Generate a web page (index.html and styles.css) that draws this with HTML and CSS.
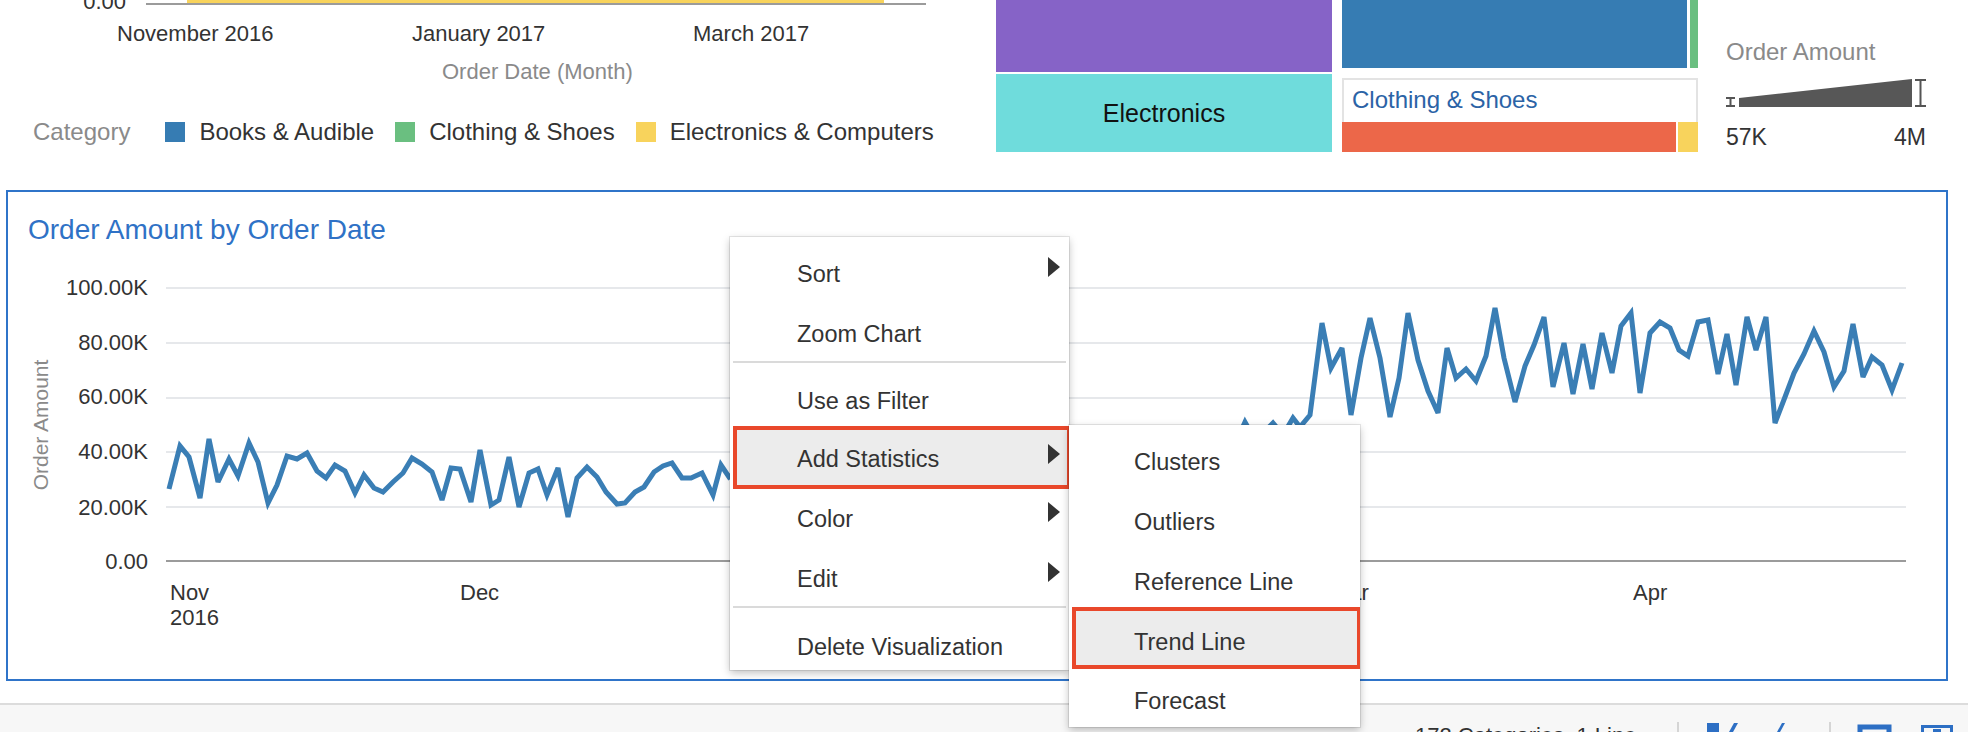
FILE: index.html
```html
<!DOCTYPE html>
<html>
<head>
<meta charset="utf-8">
<title>Order Amount by Order Date</title>
<link rel="stylesheet" href="styles.css">
</head>
<body>
<div class="page">
  <section class="top">
    <div class="bar-stub">
      <div class="axis-row">
        <span class="tick-zero">0.00</span>
        <div class="axis-stub"><div class="ybar"></div></div>
      </div>
      <div class="month-row">
        <span class="m m1">November 2016</span>
        <span class="m m2">January 2017</span>
        <span class="m">March 2017</span>
      </div>
      <div class="x-title">Order Date (Month)</div>
      <div class="legend">
        <span class="legend-title">Category</span>
        <span class="sw sw-blue"></span><span class="lg-text">Books &amp; Audible</span>
        <span class="sw sw-green"></span><span class="lg-text">Clothing &amp; Shoes</span>
        <span class="sw sw-yellow"></span><span class="lg-text">Electronics &amp; Computers</span>
      </div>
    </div>
    <div class="treemap">
      <div class="tm-col1">
        <div class="tm-purple"></div>
        <div class="tm-cyan">Electronics</div>
      </div>
      <div class="tm-col2">
        <div class="tm-row1"><div class="tm-blue"></div><div class="tm-green"></div></div>
        <div class="tm-label">Clothing &amp; Shoes</div>
        <div class="tm-row2"><div class="tm-orange"></div><div class="tm-yellow"></div></div>
      </div>
    </div>
    <div class="size-legend">
      <div class="sl-title">Order Amount</div>
      <svg class="sl-wedge" width="200" height="30" viewBox="0 0 200 30">
        <rect x="0" y="18" width="9" height="2" fill="#555"/>
        <rect x="3.5" y="18" width="2" height="10" fill="#555"/>
        <rect x="0" y="26" width="9" height="2" fill="#555"/>
        <polygon points="13,19 186,0 186,28 13,28" fill="#575757"/>
        <rect x="189" y="0" width="11" height="2" fill="#555"/>
        <rect x="193.5" y="0" width="2" height="28" fill="#555"/>
        <rect x="189" y="26" width="11" height="2" fill="#555"/>
      </svg>
      <div class="sl-values"><span>57K</span><span>4M</span></div>
    </div>
  </section>

  <section class="viz">
    <h2 class="viz-title">Order Amount by Order Date</h2>
    <svg class="line-chart" width="1938" height="432" viewBox="8 247 1938 432">
      <g class="grid">
        <line x1="166" y1="288" x2="1906" y2="288"/>
        <line x1="166" y1="343" x2="1906" y2="343"/>
        <line x1="166" y1="398" x2="1906" y2="398"/>
        <line x1="166" y1="452" x2="1906" y2="452"/>
        <line x1="166" y1="507" x2="1906" y2="507"/>
      </g>
      <line class="zero" x1="166" y1="561" x2="1906" y2="561"/>
      <g class="ylab">
        <text x="148" y="295">100.00K</text>
        <text x="148" y="350">80.00K</text>
        <text x="148" y="404">60.00K</text>
        <text x="148" y="459">40.00K</text>
        <text x="148" y="515">20.00K</text>
        <text x="148" y="569">0.00</text>
      </g>
      <text class="ytitle" x="40" y="432.5" transform="rotate(-90 40 425)">Order Amount</text>
      <g class="xlab">
        <text x="170" y="600">Nov</text>
        <text x="170" y="625">2016</text>
        <text x="460" y="600">Dec</text>
        <text x="760" y="600">Jan</text>
        <text x="1331" y="600">Mar</text>
        <text x="1633" y="600">Apr</text>
      </g>
      <polyline class="series" points="169,489 180,446 189,457 200,498 209,439 218,482 229,459 238,476 249,443 258,462 268,503 277,485 287,456 297,459 307,453 317,471 326,478 335,465 345,471 355,493 364,475 374,488 383,492 393,482 403,473 412,458 422,464 432,472 442,500 451,468 460,469 471,502 480,450 491,505 499,500 509,457 519,507 529,473 538,469 547,495 558,468 568,517 577,478 587,467 597,477 606,492 617,504 625,503 635,492 644,487 654,472 663,466 672,463 682,478 691,478 702,473 713,495 721,465 729,477 739,470 749,455 759,490 768,462 778,480 788,458 798,495 807,470 817,452 827,485 837,466 846,478 856,448 866,490 876,470 886,460 895,476 905,450 915,488 925,466 935,455 944,480 954,462 964,445 974,492 983,468 993,455 1003,472 1013,448 1022,482 1032,460 1042,470 1052,445 1061,478 1071,455 1081,440 1091,462 1100,448 1110,436 1120,458 1130,442 1140,450 1149,432 1159,455 1169,438 1179,446 1189,430 1198,448 1208,436 1218,444 1228,432 1237,440 1245,422 1255,440 1264,432 1273,423 1283,435 1293,418 1300,427 1310,415 1322,323 1331,368 1342,348 1351,415 1361,358 1370,318 1380,358 1390,417 1399,378 1408,313 1418,360 1428,391 1438,413 1447,348 1456,378 1466,369 1476,381 1486,356 1495,308 1504,358 1515,402 1525,366 1534,345 1544,317 1553,387 1564,343 1573,394 1583,344 1592,389 1602,333 1612,373 1621,326 1631,313 1640,393 1650,333 1660,322 1670,328 1679,350 1688,356 1698,322 1708,320 1718,374 1727,334 1736,385 1747,317 1756,350 1766,317 1775,423 1785,397 1794,373 1804,354 1814,331 1824,352 1834,387 1844,371 1853,324 1863,377 1872,357 1882,365 1892,390 1902,363"/>
    </svg>
  </section>

  <footer class="status">
    <span class="status-text">172 Categories, 1 Line</span>
    <svg class="status-tools" width="291" height="27" viewBox="0 0 291 27">
      <rect x="0" y="17" width="2" height="10" fill="#d5d5d5"/>
      <rect x="30" y="18" width="12" height="9" fill="#2d6fc4"/>
      <path d="M52 27 L57 18 L61 18 L56 27 Z" fill="#2d6fc4"/>
      <path d="M100 27 L105 18 L108 18 L103 27 Z" fill="#2d6fc4"/>
      <rect x="152" y="17" width="2" height="10" fill="#d5d5d5"/>
      <rect x="183" y="22" width="29" height="12" fill="none" stroke="#2d6fc4" stroke-width="5"/>
      <rect x="245.5" y="21.5" width="29" height="12" fill="none" stroke="#2d6fc4" stroke-width="3"/>
      <rect x="256" y="24" width="8" height="6" fill="#2d6fc4"/>
    </svg>
  </footer>

  <div class="ctx-menu">
    <div class="mi">Sort<span class="arrow"></span></div>
    <div class="mi">Zoom Chart</div>
    <div class="sep"></div>
    <div class="mi">Use as Filter</div>
    <div class="mi mi-hot">Add Statistics<span class="arrow"></span></div>
    <div class="mi">Color<span class="arrow"></span></div>
    <div class="mi">Edit<span class="arrow"></span></div>
    <div class="sep"></div>
    <div class="mi mi-last">Delete Visualization</div>
  </div>

  <div class="ctx-sub">
    <div class="si">Clusters</div>
    <div class="si">Outliers</div>
    <div class="si">Reference Line</div>
    <div class="si si-hot">Trend Line</div>
    <div class="si si-after">Forecast</div>
  </div>
</div>
</body>
</html>
```

FILE: styles.css
```css
* { box-sizing: border-box; }

html, body {
  margin: 0;
  padding: 0;
  background: #ffffff;
}

body {
  font-family: "Liberation Sans", Arial, Helvetica, sans-serif;
  color: #333333;
}

.page {
  position: relative;
  width: 1968px;
  height: 732px;
  overflow: hidden;
}

/* ---------- top area ---------- */
.top {
  display: flex;
  height: 190px;
}

.bar-stub {
  flex: none;
  width: 996px;
}

.axis-row {
  display: flex;
  height: 5px;
}

.tick-zero {
  flex: none;
  width: 126px;
  height: 22px;
  margin-top: -9px;
  text-align: right;
  font-size: 22px;
  line-height: 22px;
  color: #333;
}

.axis-stub {
  flex: none;
  margin-left: 20px;
  width: 780px;
  height: 5px;
  padding-left: 41px;
  border-bottom: 2px solid #9b9b9b;
}

.ybar {
  width: 697px;
  height: 3px;
  background: #f8d35c;
}

.month-row {
  display: flex;
  margin-top: 16px;
  padding-left: 117px;
  font-size: 22px;
  line-height: 26px;
  color: #333;
  white-space: nowrap;
}

.m1 { flex: none; width: 295px; }
.m2 { flex: none; width: 281px; }

.x-title {
  margin-top: 12px;
  padding-left: 442px;
  font-size: 22px;
  line-height: 26px;
  color: #8a8a8a;
}

.legend {
  display: flex;
  align-items: center;
  margin-top: 33px;
  padding-left: 33px;
  font-size: 24px;
  line-height: 28px;
  color: #333;
  white-space: nowrap;
}

.legend-title {
  color: #8a8a8a;
  margin-right: 35px;
}

.sw {
  flex: none;
  width: 20px;
  height: 20px;
  margin-right: 14px;
}

.sw-blue { background: #367cb3; }
.sw-green { background: #6abf80; }
.sw-yellow { background: #f8d35c; }

.lg-text { margin-right: 21px; }

/* treemap */
.treemap {
  flex: none;
  display: flex;
  gap: 10px;
  width: 702px;
  height: 152px;
}

.tm-col1 {
  flex: none;
  width: 336px;
  display: flex;
  flex-direction: column;
  gap: 2px;
}

.tm-purple {
  height: 72px;
  background: #8663c7;
}

.tm-cyan {
  height: 78px;
  background: #6fdcdc;
  display: flex;
  align-items: center;
  justify-content: center;
  font-size: 25px;
  color: #111;
}

.tm-col2 {
  flex: none;
  width: 356px;
  display: flex;
  flex-direction: column;
}

.tm-row1 {
  display: flex;
  gap: 3px;
  height: 68px;
}

.tm-blue { flex: 1; background: #367cb3; }
.tm-green { flex: none; width: 8px; background: #6abf80; }

.tm-label {
  margin-top: 10px;
  height: 44px;
  border: 2px solid #e3e3e3;
  border-bottom: none;
  padding-left: 8px;
  font-size: 24px;
  line-height: 40px;
  color: #2b63a6;
  white-space: nowrap;
}

.tm-row2 {
  display: flex;
  gap: 2px;
  height: 30px;
}

.tm-orange { flex: 1; background: #ec6749; }
.tm-yellow { flex: none; width: 20px; background: #f8d35c; }

/* size legend */
.size-legend {
  flex: none;
  margin-left: 28px;
  width: 200px;
  display: flex;
  flex-direction: column;
}

.sl-title {
  margin-top: 38px;
  font-size: 24px;
  line-height: 28px;
  color: #8a8a8a;
  white-space: nowrap;
}

.sl-wedge {
  display: block;
  margin-top: 13px;
}

.sl-values {
  display: flex;
  justify-content: space-between;
  margin-top: 14px;
  font-size: 23px;
  line-height: 28px;
  color: #333;
}

/* ---------- main visualization ---------- */
.viz {
  margin-left: 6px;
  width: 1942px;
  height: 491px;
  border: 2px solid #2f74c9;
}

.viz-title {
  margin: 0;
  padding: 21px 0 0 20px;
  font-size: 28px;
  line-height: 34px;
  font-weight: normal;
  color: #2f72c6;
}

.line-chart {
  display: block;
}

.line-chart text {
  font-family: "Liberation Sans", Arial, Helvetica, sans-serif;
}

.grid line {
  stroke: #e6e8eb;
  stroke-width: 2;
}

.zero {
  stroke: #9b9b9b;
  stroke-width: 2;
}

.ylab text {
  font-size: 22px;
  fill: #333;
  text-anchor: end;
}

.ytitle {
  font-size: 21px;
  fill: #8a8a8a;
  text-anchor: middle;
}

.xlab text {
  font-size: 22px;
  fill: #333;
}

.series {
  fill: none;
  stroke: #3a7eb5;
  stroke-width: 5;
  stroke-linejoin: miter;
  stroke-miterlimit: 3;
}

/* ---------- status bar ---------- */
.status {
  display: flex;
  margin-top: 22px;
  height: 29px;
  border-top: 2px solid #dcdcdc;
  background: #f7f7f7;
}

.status-text {
  flex: none;
  width: 262px;
  margin-left: 1415px;
  padding-top: 18px;
  font-size: 22px;
  line-height: 26px;
  color: #333;
  white-space: nowrap;
  overflow: hidden;
}

.status-tools {
  flex: none;
  display: block;
}

/* ---------- context menus ---------- */
.ctx-menu {
  position: absolute;
  left: 730px;
  top: 237px;
  width: 339px;
  height: 433px;
  padding-top: 7px;
  background: #fff;
  box-shadow: 0 0 0 1px rgba(0, 0, 0, 0.09), 0 3px 8px rgba(0, 0, 0, 0.25);
  font-size: 23.5px;
  color: #333;
}

.mi {
  position: relative;
  height: 60px;
  line-height: 60px;
  padding-left: 67px;
  white-space: nowrap;
}

.mi .arrow {
  position: absolute;
  right: 9px;
  top: 13px;
  width: 0;
  height: 0;
  border-left: 12px solid #333;
  border-top: 10px solid transparent;
  border-bottom: 10px solid transparent;
}

.mi-hot {
  margin: -5px -2px 0 3px;
  height: 63px;
  line-height: 59px;
  padding-left: 60px;
  border: 4px solid #e9482b;
  background: #ececec;
}

.mi-hot .arrow {
  top: 14px;
  right: 7px;
}

.mi-last {
  height: 54px;
  line-height: 62px;
}

.sep {
  height: 2px;
  margin: -3px 3px 8px 3px;
  background: #dadada;
}

.ctx-sub {
  position: absolute;
  left: 1069px;
  top: 425px;
  width: 291px;
  height: 302px;
  padding-top: 7px;
  overflow: hidden;
  background: #fff;
  box-shadow: 0 0 0 1px rgba(0, 0, 0, 0.09), 0 3px 8px rgba(0, 0, 0, 0.25);
  font-size: 23.5px;
  color: #333;
}

.si {
  height: 60px;
  line-height: 60px;
  padding-left: 65px;
  white-space: nowrap;
}

.si-hot {
  margin: -5px -1px 0 3px;
  height: 62px;
  line-height: 54px;
  padding-left: 58px;
  padding-top: 4px;
  border: 4px solid #e9482b;
  background: #ececec;
}

.si-after {
  margin-top: 2px;
}
```
